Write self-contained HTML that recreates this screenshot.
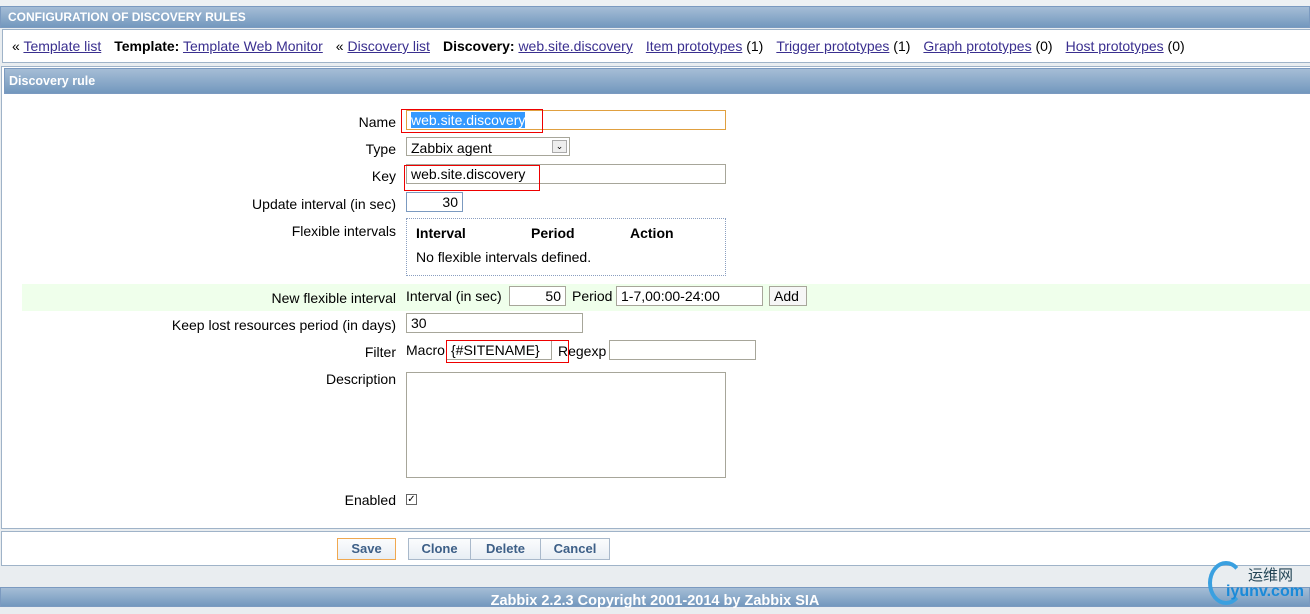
<!DOCTYPE html>
<html><head><meta charset="utf-8"><style>
*{box-sizing:border-box;margin:0;padding:0}
body{width:1310px;height:606px;background:#e9edf0;font:14px "Liberation Sans",sans-serif;color:#000;position:relative;overflow:hidden}
.a{position:absolute}
.bar{background:linear-gradient(#a5bdd6,#7398be);color:#fff;font-weight:bold;border:1px solid #7b9ac0;font-size:12px}
a{color:#3a2f8f;text-decoration:underline}
.g{margin-left:13px}
.lbl{position:absolute;right:914px;text-align:right;white-space:nowrap}
.in{position:absolute;border:1px solid #a7a69a;background:#fff;padding:0 4px;height:20px;line-height:18px;white-space:nowrap}
.red{position:absolute;border:1px solid #e00}
.btn{position:absolute;top:538px;height:22px;border:1px solid #a9b9cb;background:linear-gradient(#fbfcfd,#e8eef4);color:#3d5f87;font-weight:bold;text-align:center;line-height:20px;font-size:13px}
</style></head><body>
<div class="a" style="left:0;top:0;width:1310px;height:6px;background:#eef1f3"></div>
<div class="a bar" style="left:0;top:6px;width:1310px;height:22px;line-height:20px;padding-left:7px">CONFIGURATION OF DISCOVERY RULES</div>
<div class="a" style="left:2px;top:29px;width:1310px;height:34px;background:#fff;border:1px solid #9fb3c8;line-height:32px;padding-left:9px;white-space:nowrap">« <a>Template list</a><b class="g">Template:</b> <a>Template Web Monitor</a><span class="g">«</span> <a>Discovery list</a><b class="g">Discovery:</b> <a>web.site.discovery</a><a class="g">Item prototypes</a> (1)<a class="g">Trigger prototypes</a> (1)<a class="g">Graph prototypes</a> (0)<a class="g">Host prototypes</a> (0)</div>
<div class="a" style="left:1px;top:66px;width:1312px;height:463px;background:#fff;border:1px solid #9fb3c8"></div>
<div class="a bar" style="left:4px;top:68px;width:1310px;height:26px;line-height:25px;padding-left:4px;font-size:12.5px">Discovery rule</div>

<div class="lbl" style="top:114px">Name</div>
<div class="in" style="left:406px;top:110px;width:320px;border-color:#e0a040"><span style="background:#3399ff;color:#fff">web.site.discovery</span></div>
<div class="red" style="left:401px;top:109px;width:142px;height:24px"></div>
<div class="lbl" style="top:141px">Type</div>
<div class="in" style="left:406px;top:137px;width:164px;height:19px;line-height:20px">Zabbix agent<span class="a" style="right:2px;top:2px;width:15px;height:13px;border:1px solid #aaa;background:#eee;font-size:9px;line-height:11px;text-align:center">⌄</span></div>
<div class="lbl" style="top:168px">Key</div>
<div class="in" style="left:406px;top:164px;width:320px">web.site.discovery</div>
<div class="red" style="left:404px;top:165px;width:136px;height:26px"></div>
<div class="lbl" style="top:196px">Update interval (in sec)</div>
<div class="in" style="left:406px;top:192px;width:57px;text-align:right;border-color:#7b9ac0">30</div>
<div class="lbl" style="top:223px">Flexible intervals</div>
<div class="a" style="left:406px;top:218px;width:320px;height:58px;border:1px dotted #8a9ec0;padding:6px 9px">
<div style="font-weight:bold;white-space:nowrap"><span style="display:inline-block;width:115px">Interval</span><span style="display:inline-block;width:99px">Period</span>Action</div>
<div style="margin-top:8px">No flexible intervals defined.</div></div>
<div class="a" style="left:22px;top:284px;width:1290px;height:27px;background:#efffeb"></div>
<div class="lbl" style="top:290px">New flexible interval</div>
<div class="a" style="left:406px;top:288px">Interval (in sec)</div>
<div class="in" style="left:509px;top:286px;width:57px;text-align:right">50</div>
<div class="a" style="left:572px;top:288px">Period</div>
<div class="in" style="left:616px;top:286px;width:147px">1-7,00:00-24:00</div>
<div class="in" style="left:769px;top:286px;width:38px;background:#f6f6f6">Add</div>
<div class="lbl" style="top:317px">Keep lost resources period (in days)</div>
<div class="in" style="left:406px;top:313px;width:177px">30</div>
<div class="lbl" style="top:344px">Filter</div>
<div class="a" style="left:406px;top:342px">Macro</div>
<div class="in" style="left:446px;top:340px;width:106px">{#SITENAME}</div>
<div class="a" style="left:558px;top:343px">Regexp</div>
<div class="in" style="left:609px;top:340px;width:147px"></div>
<div class="red" style="left:446px;top:340px;width:123px;height:23px"></div>
<div class="lbl" style="top:371px">Description</div>
<div class="in" style="left:406px;top:372px;width:320px;height:106px"></div>
<div class="lbl" style="top:492px">Enabled</div>
<div class="a" style="left:406px;top:494px;width:11px;height:11px;border:1px solid #666;font-size:10px;line-height:9px;text-align:center">✓</div>

<div class="a" style="left:1px;top:531px;width:1312px;height:35px;background:#fff;border:1px solid #9fb3c8"></div>
<div class="btn" style="left:337px;width:59px;border-color:#f0a850">Save</div>
<div class="btn" style="left:408px;width:63px">Clone</div>
<div class="btn" style="left:470px;width:71px">Delete</div>
<div class="btn" style="left:540px;width:70px">Cancel</div>
<div class="a bar" style="left:0;top:587px;width:1310px;height:20px;text-align:center;line-height:26px;font-size:14.5px">Zabbix 2.2.3 Copyright 2001-2014 by Zabbix SIA</div>
<div class="a" style="left:1208px;top:561px;width:36px;height:44px;border:4px solid #3aa0e0;border-right-color:transparent;border-radius:50%"></div>
<div class="a" style="left:1248px;top:564px;color:#245;font:15px 'Noto Sans CJK SC',sans-serif">运维网</div>
<div class="a" style="left:1226px;top:583px;color:#1a8ad8;font-weight:bold;font-size:16px">iyunv.com</div>
</body></html>
